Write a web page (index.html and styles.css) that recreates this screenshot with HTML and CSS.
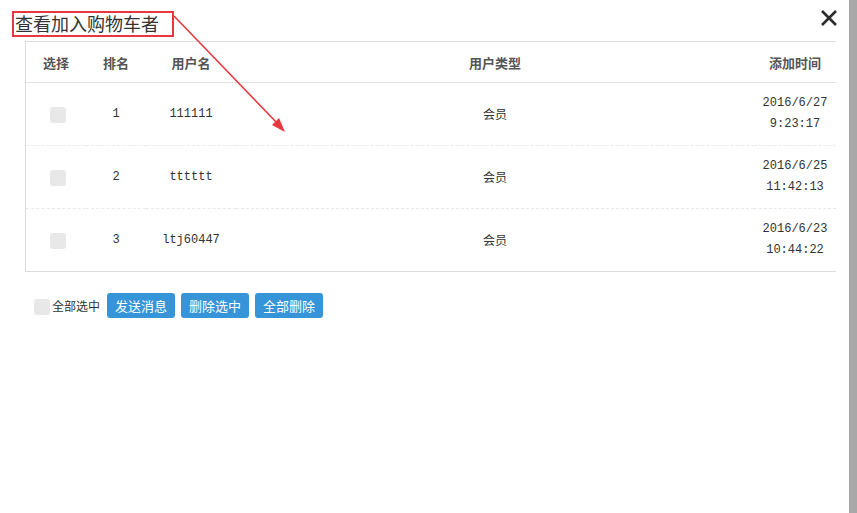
FILE: index.html
```html
<!DOCTYPE html>
<html lang="zh">
<head>
    <meta charset="UTF-8">
    <title>查看加入购物车者</title>
    <link rel="stylesheet" href="styles.css">
</head>
<body>
    <div class="modal">
        <div class="modal-head">
            <h2 class="modal-title">查看加入购物车者</h2>
            <span class="close">
                <svg width="18" height="18" viewBox="0 0 18 18"><path d="M2 2 L16 16 M16 2 L2 16" stroke="#2b2b2b" stroke-width="2.6" fill="none"/></svg>
            </span>
        </div>

        <div class="list-box">
            <table class="list">
                <colgroup>
                    <col style="width:60px">
                    <col style="width:60px">
                    <col style="width:90px">
                    <col>
                    <col style="width:82px">
                </colgroup>
                <thead>
                    <tr>
                        <th>选择</th>
                        <th>排名</th>
                        <th>用户名</th>
                        <th>用户类型</th>
                        <th>添加时间</th>
                    </tr>
                </thead>
                <tbody>
                    <tr>
                        <td><span class="check"></span></td>
                        <td class="mono">1</td>
                        <td class="mono">111111</td>
                        <td class="type">会员</td>
                        <td class="mono time">2016/6/27<br>9:23:17</td>
                    </tr>
                    <tr>
                        <td><span class="check"></span></td>
                        <td class="mono">2</td>
                        <td class="mono">tttttt</td>
                        <td class="type">会员</td>
                        <td class="mono time">2016/6/25<br>11:42:13</td>
                    </tr>
                    <tr>
                        <td><span class="check"></span></td>
                        <td class="mono">3</td>
                        <td class="mono">ltj60447</td>
                        <td class="type">会员</td>
                        <td class="mono time">2016/6/23<br>10:44:22</td>
                    </tr>
                </tbody>
            </table>
        </div>

        <div class="actions">
            <label class="select-all"><span class="check"></span>全部选中</label>
            <button class="btn">发送消息</button>
            <button class="btn">删除选中</button>
            <button class="btn">全部删除</button>
        </div>

        <!-- annotation arrow -->
        <svg class="arrow" width="140" height="140" viewBox="0 0 140 140">
            <line x1="2" y1="2" x2="106" y2="110" stroke="#e8383d" stroke-width="1.6"/>
            <path d="M113 118 L100 111 L107 104 Z" fill="#e8383d"/>
        </svg>
    </div>
</body>
</html>
```

FILE: styles.css
```css
body {
    margin: 0;
    background: #a8a8a8;
    font-family: "Noto Sans CJK SC", "Liberation Sans", sans-serif;
    height: 513px;
    overflow: hidden;
}
.modal {
    position: relative;
    width: 849px;
    height: 513px;
    background: #fff;
    color: #333;
}
.modal-head {
    display: flex;
    justify-content: space-between;
    align-items: flex-start;
    height: 41px;
}
.modal-title {
    margin: 11px 0 0 12px;
    padding: 0 13px 0 1px;
    height: 22px;
    line-height: 21px;
    border: 2px solid #e8383d;
    font-size: 18px;
    font-weight: normal;
    color: #333;
}
.close {
    margin: 8px 11px 0 0;
    width: 18px;
    height: 18px;
}
.list-box {
    margin-left: 25px;
    width: 810px;
    border-top: 1px solid #dcdcdc;
    border-left: 1px solid #dcdcdc;
    border-bottom: 1px solid #dcdcdc;
}
.list {
    width: 100%;
    border-collapse: collapse;
    table-layout: fixed;
}
.list th {
    height: 40px;
    font-size: 13px;
    font-weight: bold;
    color: #555;
    text-align: center;
    border-bottom: 1px solid #e3e3e3;
    padding: 0;
}
.list td {
    height: 62px;
    padding: 0;
    text-align: center;
    font-size: 12px;
    color: #333;
    border-bottom: 1px dashed #e9e9e9;
}
.list td.type {
    line-height: 12px;
}
.list tbody tr:last-child td {
    border-bottom: none;
}
.mono {
    font-family: "Liberation Mono", "DejaVu Sans Mono", monospace;
    font-size: 10px;
    color: #222;
}
.time {
    line-height: 21px;
}
.check {
    display: inline-block;
    width: 16px;
    height: 16px;
    border-radius: 3px;
    background: #e8e8e8;
    vertical-align: middle;
    margin-left: 4px;
}
.actions {
    display: flex;
    align-items: center;
    gap: 6px;
    margin: 21px 0 0 34px;
}
.select-all {
    display: flex;
    align-items: center;
    font-size: 12px;
    color: #333;
    margin-right: 1px;
}
.select-all .check {
    margin: 2px 2px 0 0;
}
.btn {
    height: 25px;
    padding: 0 8px;
    border: none;
    border-radius: 3px;
    background: #3695d8;
    color: #fff;
    font-family: inherit;
    font-size: 13px;
}
.arrow {
    position: absolute;
    left: 172px;
    top: 14px;
}
```
